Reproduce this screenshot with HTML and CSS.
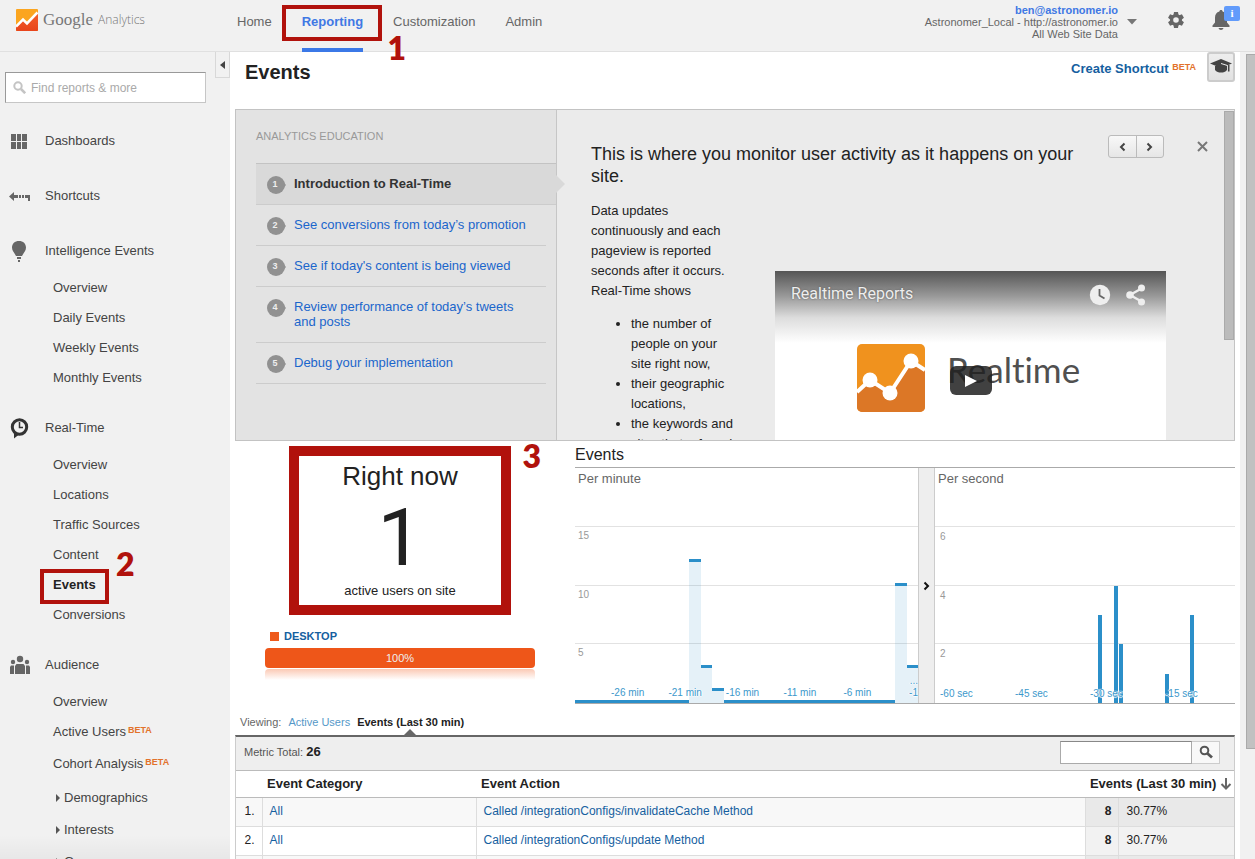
FILE: index.html
```html
<!DOCTYPE html>
<html lang="en">
<head>
<meta charset="utf-8">
<title>Events - Google Analytics</title>
<link rel="stylesheet" href="styles.css">
</head>
<body>
<header class="topbar">
  <a class="brand" href="#">
    <svg width="22" height="22" viewBox="0 0 22 22" aria-hidden="true">
      <defs><linearGradient id="lg" x1="0" y1="0" x2="0" y2="1"><stop offset="0" stop-color="#f4602a"/><stop offset="1" stop-color="#e8451c"/></linearGradient></defs>
      <rect width="22" height="22" rx="1" fill="#fba51f"/>
      <path d="M0 17 6.500 11 11 15 22 3V21a1 1 0 0 1-1 1H1a1 1 0 0 1-1-1z" fill="url(#lg)"/>
      <path d="M0 17.500 7 10.500 11 14.500 21.500 3.500" fill="none" stroke="#fff" stroke-width="2.600"/>
    </svg>
    <span class="brand-google">Google</span><span class="brand-product">Analytics</span>
  </a>
  <nav class="tabs">
    <a href="#">Home</a>
    <a href="#" class="active">Reporting<span class="mark mark-tab"></span><span class="mark-num num-one">1</span></a>
    <a href="#">Customization</a>
    <a href="#">Admin</a>
  </nav>
  <button class="account" type="button">
    <span class="account-text"><b>ben@astronomer.io</b><span>Astronomer_Local - http://astronomer.io</span><span>All Web Site Data</span></span>
    <svg width="10" height="6" viewBox="0 0 10 6"><path d="M0 0h10L5 5.500z" fill="#777"/></svg>
  </button>
  <button class="icon-btn gear" type="button" aria-label="Settings">
    <svg width="16" height="16" viewBox="0 0 16 16"><g fill="#666"><path fill-rule="evenodd" d="M8 2a6 6 0 1 1 0 12A6 6 0 0 1 8 2zm0 3.200a2.800 2.800 0 1 0 0 5.600 2.800 2.800 0 0 0 0-5.600z"/><path d="M6 0h4l.6 3.400H5.400zM6 16h4l.6-3.400H5.400z"/><path d="M6 0h4l.6 3.400H5.400zM6 16h4l.6-3.400H5.400z" transform="rotate(60 8 8)"/><path d="M6 0h4l.6 3.400H5.400zM6 16h4l.6-3.400H5.400z" transform="rotate(120 8 8)"/></g></svg>
  </button>
  <button class="icon-btn bell" type="button" aria-label="Notifications">
    <svg width="18" height="20" viewBox="0 0 18 20"><path d="M9 0c1 0 1.600.6 1.600 1.500C13.500 2.300 15 4.500 15 8v4.500l2.500 3V17H.5v-1.500l2.500-3V8c0-3.500 1.500-5.700 4.400-6.500C7.400.6 8 0 9 0zM6.500 18h5c-.3 1.300-1.300 2-2.500 2s-2.200-.7-2.500-2z" fill="#666"/></svg>
    <span class="bell-badge">i</span>
  </button>
</header>

<div class="shell">
  <aside class="sidebar">
    <button class="collapse" type="button" aria-label="Collapse menu"><svg width="5" height="8" viewBox="0 0 5 8"><path d="M5 0v8L0 4z" fill="#444"/></svg></button>
    <label class="find">
      <svg width="13" height="13" viewBox="0 0 13 13"><circle cx="5" cy="5" r="3.700" fill="none" stroke="#c4c4c4" stroke-width="2"/><path d="M8 8l4.200 4.200" stroke="#c4c4c4" stroke-width="2.600"/></svg>
      <input type="text" placeholder="Find reports &amp; more" aria-label="Find reports and more">
    </label>
    <nav>
      <section class="group"><a class="group-head" href="#"><svg width="24" height="22" viewBox="0 0 24 22"><path d="M3 4h5v7H3zM9 4h4v7H9zM14 4h5v7h-5zM3 12h5v7H3zM9 12h4v7H9zM14 12h5v7h-5z" fill="#666"/></svg>Dashboards</a></section>
      <section class="group"><a class="group-head" href="#"><svg width="24" height="22" viewBox="0 0 24 22"><path d="M1 11.500 6 7v3h4v3H6v3zM11 10h2v3h-2zM14 10h2v3h-2zM17 10h5v6h-2v-3h-3z" fill="#666"/></svg>Shortcuts</a></section>
      <section class="group"><a class="group-head" href="#"><svg width="24" height="22" viewBox="0 0 24 22"><path d="M11 1c4.200 0 7 2.700 7 6.500 0 3.200-2 4.700-4 8.500H8C6 12.200 4 10.700 4 7.500 4 3.700 6.800 1 11 1zM9 17h4v2H9zM10 20h2v2h-2z" fill="#666"/></svg>Intelligence Events</a>
        <ul><li><a href="#">Overview</a></li><li><a href="#">Daily Events</a></li><li><a href="#">Weekly Events</a></li><li><a href="#">Monthly Events</a></li></ul>
      </section>
      <section class="group"><a class="group-head" href="#"><svg width="24" height="22" viewBox="0 0 24 22"><circle cx="11.500" cy="10" r="7.200" fill="none" stroke="#333" stroke-width="3"/><path d="M6 15v6.500l5-4z" fill="#333"/><path d="M11.500 5v5.500H15" fill="none" stroke="#333" stroke-width="1.500"/></svg>Real-Time</a>
        <ul><li><a href="#">Overview</a></li><li><a href="#">Locations</a></li><li><a href="#">Traffic Sources</a></li><li><a href="#">Content</a></li><li><a href="#" class="current">Events<span class="mark mark-side"></span><span class="mark-num num-two">2</span></a></li><li><a href="#">Conversions</a></li></ul>
      </section>
      <section class="group"><a class="group-head" href="#"><svg width="24" height="22" viewBox="0 0 24 22"><g fill="#666"><circle cx="12" cy="5" r="3.200"/><circle cx="5" cy="8" r="2.200"/><circle cx="19" cy="8" r="2.200"/><path d="M7 20v-8l1.500-2h7l1.500 2v8zM2 20v-7l1-1.500h3V20zM22 20v-7l-1-1.500h-3V20z"/></g></svg>Audience</a>
        <ul><li><a href="#">Overview</a></li><li><a href="#">Active Users</a><sup>BETA</sup></li><li><a href="#">Cohort Analysis</a><sup>BETA</sup></li>
        <li class="tree"><a href="#">Demographics</a></li><li class="tree"><a href="#">Interests</a></li><li class="tree"><a href="#">Geo</a></li></ul>
      </section>
    </nav>
  </aside>

  <main class="main">
    <div class="title-row">
      <h1>Events</h1>
      <a class="shortcut" href="#">Create Shortcut <span class="beta">BETA</span></a>
      <button class="edu-btn" type="button" aria-label="Analytics education"><svg width="22" height="16" viewBox="0 0 22 16"><path d="M5 8v4c1.500 2 3.500 2.500 6 2.500s4.500-.5 6-2.500V8z" fill="#444"/><path d="M11 1 22 5.500 11 10 0 5.500z" fill="#444"/><path d="M11 5.500 17.500 7.500v5.500" fill="none" stroke="#eee"/><path d="M18.700 7v6.500" stroke="#444" stroke-width="1.600"/></svg></button>
    </div>

    <section class="edu">
      <div class="edu-nav">
        <h2>ANALYTICS EDUCATION</h2>
        <ol>
          <li class="on"><span class="pin">1</span><span>Introduction to Real-Time</span></li>
          <li><span class="pin">2</span><a href="#">See conversions from today’s promotion</a></li>
          <li><span class="pin">3</span><a href="#">See if today's content is being viewed</a></li>
          <li><span class="pin">4</span><a href="#">Review performance of today’s tweets and posts</a></li>
          <li><span class="pin">5</span><a href="#">Debug your implementation</a></li>
        </ol>
      </div>
      <div class="edu-body">
        <div class="edu-head">
          <h3>This is where you monitor user activity as it happens on your site.</h3>
          <div class="pager">
            <button type="button" aria-label="Previous"><svg width="7" height="10" viewBox="0 0 7 10"><path d="M5.500 1.500 2 5l3.500 3.500" fill="none" stroke="#444" stroke-width="2"/></svg></button><button type="button" aria-label="Next"><svg width="7" height="10" viewBox="0 0 7 10"><path d="M1.500 1.500 5 5 1.500 8.500" fill="none" stroke="#444" stroke-width="2"/></svg></button>
          </div>
          <button class="close" type="button" aria-label="Close"><svg width="11" height="11" viewBox="0 0 11 11"><path d="M1 1l9 9M10 1l-9 9" stroke="#777" stroke-width="2"/></svg></button>
        </div>
        <div class="edu-cols">
          <div class="edu-text">
            <p>Data updates continuously and each pageview is reported seconds after it occurs. Real-Time shows</p>
            <ul><li>the number of people on your site right now,</li><li>their geographic locations,</li><li>the keywords and sites that referred them,</li></ul>
          </div>
          <div class="video">
            <div class="video-bar">
              <span>Realtime Reports</span>
              <svg width="22" height="22" viewBox="0 0 22 22"><circle cx="11" cy="11" r="10.200" fill="#eee"/><path d="M10.500 5v6.500l5 3" fill="none" stroke="#666" stroke-width="1.800"/></svg>
              <svg width="20" height="22" viewBox="0 0 20 22"><path d="M15.500 4.500 4 11l11.500 6.500" fill="none" stroke="#eee" stroke-width="2.400"/><g fill="#eee"><circle cx="15.500" cy="4" r="3.500"/><circle cx="4" cy="11" r="3.800"/><circle cx="15.500" cy="18" r="3.500"/></g></svg>
            </div>
            <div class="video-art">
              <svg width="70" height="70" viewBox="0 0 70 70">
                <rect x="1" y="1" width="68" height="68" rx="5" fill="#f0921e"/>
                <path d="M1 49 14 37 34 50 55 18 69 27V64a5 5 0 0 1-5 5H6a5 5 0 0 1-5-5z" fill="#dc7726"/>
                <path d="M1 49 14 37 34 50 55 18 69 27" fill="none" stroke="#fff" stroke-width="4"/>
                <g fill="#fff"><circle cx="14" cy="37" r="7.500"/><circle cx="34" cy="50" r="7.500"/><circle cx="55" cy="18" r="7.500"/></g>
              </svg>
              <span>Realtime</span>
            </div>
            <button class="play" type="button" aria-label="Play"><svg width="12" height="12" viewBox="0 0 12 12"><path d="M0 0 12 6 0 12z" fill="#fff"/></svg></button>
          </div>
        </div>
      </div>
      <div class="edu-scroll"><div></div></div>
    </section>

    <section class="live">
      <div class="now">
        <div class="now-box"><div class="now-title">Right now</div><div class="now-count">1</div><div class="now-sub">active users on site</div></div>
        <span class="mark-num num-three">3</span>
        <div class="device"><i></i><a href="#">DESKTOP</a></div>
        <div class="share">100%</div>
        <div class="share-reflection"></div>
      </div>
      <div class="charts">
        <h2>Events</h2>
        <div class="charts-row">
          <div class="chart minutes">
            <div class="grid"><div><b>Per minute</b></div><div>15</div><div>10</div><div>5</div></div>
            <div class="bars">
              <i></i><i></i><i></i><i></i><i></i><i></i><i></i><i></i><i></i><i></i><i style="height:60%"></i><i style="height:15%"></i><i style="height:5%"></i><i></i><i></i><i></i><i></i><i></i><i></i><i></i><i></i><i></i><i></i><i></i><i></i><i></i><i></i><i></i><i style="height:50%"></i><i style="height:15%"></i>
            </div>
            <div class="axis"><span>-26 min</span><span>-21 min</span><span>-16 min</span><span>-11 min</span><span>-6 min</span><span>...<br>-1</span></div>
          </div>
          <button class="splitter" type="button" aria-label="Resize charts"><svg width="7" height="10" viewBox="0 0 7 10"><path d="M1.500 1.500 5 5 1.500 8.500" fill="none" stroke="#111" stroke-width="2"/></svg></button>
          <div class="chart seconds">
            <div class="grid"><div><b>Per second</b></div><div>6</div><div>4</div><div>2</div></div>
            <div class="bars">
              <i style="grid-column:33;height:37.5%"></i><i style="grid-column:36;height:50%"></i><i style="grid-column:37;height:25%"></i><i style="grid-column:46;height:12.5%"></i><i style="grid-column:51;height:37.5%"></i>
            </div>
            <div class="axis"><span>-60 sec</span><span>-45 sec</span><span>-30 sec</span><span>-15 sec</span></div>
          </div>
        </div>
      </div>
    </section>

    <div class="viewing"><span>Viewing:</span><a href="#">Active Users</a><b>Events (Last 30 min)</b></div>
    <section class="report">
      <div class="tools">
        <span>Metric Total: <b>26</b></span>
        <form class="search"><input type="text" aria-label="Search table"><button type="button" aria-label="Search"><svg width="14" height="14" viewBox="0 0 14 14"><circle cx="5.500" cy="5.500" r="3.800" fill="none" stroke="#555" stroke-width="2"/><path d="M8.500 8.500l4.500 4" stroke="#555" stroke-width="2.800"/></svg></button></form>
      </div>
      <table>
        <colgroup><col class="c-num"><col class="c-cat"><col><col class="c-val"><col class="c-pct"></colgroup>
        <thead><tr><th></th><th>Event Category</th><th>Event Action</th><th colspan="2" class="sorted">Events (Last 30 min) <svg width="12" height="12" viewBox="0 0 12 12"><path d="M6 0v10M1.500 6 6 10.500 10.500 6" fill="none" stroke="#666" stroke-width="2"/></svg></th></tr></thead>
        <tbody>
          <tr><td>1.</td><td><a href="#">All</a></td><td><a href="#">Called /integrationConfigs/invalidateCache Method</a></td><td class="val">8</td><td class="pct">30.77%</td></tr>
          <tr><td>2.</td><td><a href="#">All</a></td><td><a href="#">Called /integrationConfigs/update Method</a></td><td class="val">8</td><td class="pct">30.77%</td></tr>
          <tr><td></td><td></td><td></td><td class="val"></td><td class="pct"></td></tr>
        </tbody>
      </table>
    </section>
  </main>
  <div class="page-scroll"><div></div></div>
</div>
</body>
</html>
```
FILE: styles.css
```css
* { box-sizing: border-box; }
body {
  margin: 0;
  height: 100vh;
  display: flex;
  flex-direction: column;
  overflow: hidden;
  background: #fff;
  color: #222;
  font: 13px/15px "Liberation Sans", Arial, sans-serif;
}
a { color: #15c; text-decoration: none; }
h1, h2, h3, p, ul, ol { margin: 0; padding: 0; }
button { margin: 0; padding: 0; border: 0; background: none; font: inherit; color: inherit; }
svg { display: block; flex: none; }
input { font: inherit; min-width: 0; outline: 0; }

/* Red call-outs and their numbers */
.mark { position: absolute; border: 4px solid #b1120c; }
.mark-num { position: absolute; font: 800 32px/32px Lato, sans-serif; color: #b1120c; z-index: 3; }
.mark-tab { inset: 5px -19px 7px -20px; }
.num-one { right: -43px; top: 32px; }
.mark-side { inset: -1px -13px -4px -13px; }
.num-two { right: -39px; top: -22px; }
.num-three { right: 24px; top: -1px; }

/* Top bar */
.topbar { flex: none; display: flex; align-items: center; height: 52px; background: #f1f1f1; border-bottom: 1px solid #e0e0e0; padding: 0 15px 0 16px; }
.brand { display: flex; align-items: center; width: 221px; padding-bottom: 11px; color: #777; }
.brand-google { font: 17px/22px "Liberation Serif", serif; padding: 0 5px; }
.brand-product { font: 300 12px/22px "Open Sans", sans-serif; }
.tabs { display: flex; gap: 30px; flex: 1; align-self: stretch; }
.tabs a { position: relative; height: 52px; padding-top: 14px; color: #666; }
.tabs .active { color: #4078e4; font-weight: bold; border-bottom: 4px solid #3b78e7; }
.account { display: flex; align-items: center; gap: 9px; align-self: flex-start; padding-top: 4px; text-align: right; font-size: 11px; line-height: 12px; color: #666; }
.account-text { display: grid; }
.account b { color: #4078e4; }
.icon-btn { position: relative; align-self: flex-start; }
.gear { margin: 12px 0 0 31px; }
.bell { margin: 10px 10px 0 28px; }
.bell-badge { position: absolute; left: 12px; top: -4px; width: 16px; height: 15px; border-radius: 2px; background: #619bfb; color: #fff; font: bold 11px/15px "Liberation Serif", serif; text-align: center; }

.shell { flex: 1; min-height: 0; display: flex; }

/* Sidebar */
.sidebar { position: relative; flex: none; width: 230px; background: #f1f1f1; padding-top: 20px; overflow: hidden; }
.sidebar::after { content: ""; position: absolute; inset: auto 0 0; height: 24px; background: linear-gradient(transparent, rgba(0,0,0,.04)); }
.collapse { position: absolute; top: 0; right: 0; width: 15px; height: 26px; border: 1px solid #d8d8d8; border-top: 0; display: grid; place-items: center; }
.find { display: flex; align-items: center; gap: 5px; margin: 0 24px 10px 5px; padding-left: 7px; height: 31px; background: #fff; border: 1px solid #c6c6c6; border-top-color: #999; border-left-color: #999; }
.find input { flex: 1; border: 0; padding: 1px 0 0; font-size: 12px; }
.find input::placeholder { color: #aaa; opacity: 1; }
.sidebar a { color: #444; }
.group { padding: 20px 0; }
.group:has(ul) { padding-bottom: 7px; }
.group-head { display: flex; align-items: center; gap: 13px; height: 15px; padding-left: 8px; }
.group ul { list-style: none; margin-top: 15px; padding-left: 53px; }
.group li { height: 30px; line-height: 30px; }
.group li a { position: relative; display: inline-block; }
.group .current { color: #222; font-weight: bold; }
.group li sup { margin-left: 2px; }
.group li:has(sup) + li:has(sup) { height: 35px; line-height: 33px; }
.sidebar .tree { display: flex; align-items: center; gap: 4px; height: 32px; padding-left: 3px; }
.tree::before { content: ""; border: 4px solid transparent; border-left: 4px solid #555; border-right: 0; }
sup, .beta { font: bold 9px/12px "Liberation Sans", sans-serif; color: #e2722b; vertical-align: 3px; }

/* Main column */
.main { flex: 1; min-width: 0; padding: 0 5px; }
.title-row { display: flex; align-items: flex-start; height: 57px; padding-left: 10px; }
.title-row h1 { flex: 1; font-size: 20px; line-height: 24px; padding-top: 8px; }
.shortcut { padding-top: 9px; color: #15609f; font-weight: bold; }
.edu-btn { width: 28px; height: 30px; margin-left: 11px; border: 2px solid #ccc; border-radius: 3px; background: linear-gradient(#eee, #e2e2e2); display: flex; justify-content: center; padding-top: 4px; }

.edu { display: flex; height: 332px; border: 1px solid #c3c3c3; background: #ebebeb; overflow: hidden; }
.edu-nav { flex: none; width: 321px; padding: 19px 0 0 20px; background: #e3e3e3; border-right: 1px solid #c6c6c6; }
.edu-nav h2 { font-size: 11px; line-height: 14px; font-weight: normal; color: #999; margin-bottom: 20px; }
.edu-nav ol { list-style: none; }
.edu-nav li { display: flex; gap: 9px; margin-right: 10px; padding: 12px 10px 13px 11px; border-bottom: 1px solid #ccc; }
.edu-nav li a { color: #1b66cc; }
.edu-nav .on { position: relative; margin-right: 0; border-top: 1px solid #c3c3c3; background: #d9d9d9; font-weight: bold; color: #333; }
.on::after { content: ""; position: absolute; left: 100%; top: 11px; border: 9px solid transparent; border-left-color: #d9d9d9; border-right: 0; }
.pin { position: relative; flex: none; width: 18px; height: 18px; margin-bottom: -3px; padding-right: 2px; border-radius: 50%; background: #919191; color: #eee; font: bold 9px/16px "Liberation Sans", sans-serif; text-align: center; }
.pin::after { content: ""; position: absolute; right: -1px; top: 3px; border: 6px solid transparent; border-left: 5px solid #919191; border-right: 0; }

.edu-body { flex: 1; min-width: 0; padding: 25px 16px 0 34px; overflow: hidden; }
.edu-head { display: flex; align-items: flex-start; justify-content: space-between; }
.edu-head h3 { flex: 1; padding: 8px 20px 0 0; font-size: 18px; line-height: 22px; font-weight: normal; }
.pager { display: flex; width: 56px; height: 23px; border: 1px solid #bbb; border-radius: 3px; background: linear-gradient(#f8f8f8, #e6e6e6); }
.pager button { flex: 1; display: grid; place-items: center; }
.pager button + button { border-left: 1px solid #bbb; }
.close { margin: 6px 0 0 33px; }
.edu-cols { display: flex; gap: 40px; padding-top: 14px; }
.edu-text { width: 144px; line-height: 20px; }
.edu-text ul { margin-top: 13px; padding-left: 40px; }
.video { position: relative; width: 391px; height: 220px; margin-top: 70px; background: #fff; }
.video-bar { display: flex; align-items: flex-start; gap: 15px; height: 72px; padding: 13px 20px 0 16px; background: linear-gradient(#555, #999 35%, #ddd 65%, #fff); color: #eee; font: 16px/20px Roboto, sans-serif; }
.video-bar span { flex: 1; text-shadow: 0 0 2px #555; }
.video-art { display: flex; gap: 21px; padding-left: 81px; }
.video-art span { font: 35px/42px Lato, sans-serif; font-variant-ligatures: none; color: #505050; padding-top: 5px; }
.play { position: absolute; inset: 95px auto auto 175px; width: 42px; height: 29px; border-radius: 6px; background: rgba(32,32,32,.85); display: grid; place-items: center; }
.edu-scroll { width: 10px; padding-top: 1px; }
.edu-scroll div { height: 229px; background: #bbb; border: 1px solid #aaa; }

/* Live counters */
.live { display: flex; gap: 10px; height: 263px; }
.now { position: relative; flex: none; width: 330px; padding: 5px 30px 0; text-align: center; }
.now-box { width: 222px; margin: 0 auto; padding: 5px 0 6px; border: 10px solid #b1120c; }
.now-title { font-size: 26px; line-height: 30px; }
.now-count { margin: 7px 0 5px; font: 80px/80px Roboto, sans-serif; }
.now-sub { line-height: 16px; }
.device { display: flex; align-items: center; gap: 5px; margin-top: 14px; padding-left: 5px; font-size: 11px; font-weight: bold; }
.device i { width: 9px; height: 9px; background: #ee5a1c; }
.device a { color: #15609f; }
.share { margin-top: 4px; height: 20px; line-height: 20px; border-radius: 4px; background: #ee5619; color: #eee; font-size: 11px; }
.share-reflection { margin-top: 1px; height: 11px; border-radius: 4px 4px 0 0; background: linear-gradient(#fbc9b4, #fff); }

.charts { flex: 1; min-width: 0; display: flex; flex-direction: column; }
.charts h2 { height: 27px; font-size: 16px; line-height: 27px; font-weight: normal; border-bottom: 1px solid #aaa; }
.charts-row { flex: 1; display: flex; border-bottom: 1px solid #aaa; }
.chart { position: relative; min-width: 0; overflow: hidden; }
.minutes { flex: 343; }
.seconds { flex: 300; }
.splitter { flex: none; width: 17px; border: solid #ccc; border-width: 0 1px; background: #eee; display: grid; place-items: center; }
.grid { height: 100%; display: grid; grid-template-rows: repeat(4, 1fr); }
.grid div { padding: 3px 3px 0; border-bottom: 1px solid #e2e2e2; color: #999; font-size: 10px; line-height: 12px; }
.seconds .grid div { padding: 4px 5px 0; }
.grid div:last-child { border: 0; }
.grid b, .seconds .grid b { display: block; font-size: 13px; line-height: 15px; font-weight: normal; color: #666; }
.seconds .grid div:first-child { padding: 3px 3px 0; }
.bars { position: absolute; inset: 0; display: grid; grid-template-columns: repeat(30, 1fr); grid-template-rows: 100%; align-items: end; }
.minutes .bars i { box-sizing: content-box; border-top: 3px solid #2b8fc9; background: rgba(43,143,201,.12); background-clip: padding-box; }
.seconds .bars { grid-template-columns: repeat(59, 1fr); column-gap: 1px; }
.seconds .bars i { grid-row: 1; background: #2b8fc9; }
.axis { position: absolute; inset: auto 0 4px 0; display: flex; align-items: flex-end; color: #3c98cb; font-size: 10px; line-height: 12px; text-shadow: 0 0 1px #fff, 1px 0 1px #fff, -1px 0 1px #fff, 0 1px 1px #fff; }
.minutes .axis { padding-left: 7%; }
.axis span { flex: 0 0 18%; text-align: center; white-space: nowrap; }
.minutes .axis span:last-child { flex: 1; text-align: right; }
.seconds .axis { left: 5px; right: -5px; bottom: 3px; }
.seconds .axis span { flex: 1; text-align: left; }

/* Report table */
.viewing { display: flex; gap: 7px; height: 31px; padding: 11px 5px 0; font-size: 11px; color: #666; }
.viewing a { color: #5598c8; }
.viewing b { position: relative; color: #222; }
.viewing b::after { content: ""; position: absolute; left: 44%; bottom: 0; border: 6px solid transparent; border-bottom: 6px solid #666; border-top: 0; }
.report { border: solid #ccc; border-width: 0 1px; border-top: 2px solid #666; }
.tools { display: flex; align-items: center; justify-content: space-between; height: 34px; padding: 0 14px 3px 8px; background: #eee; border-bottom: 1px solid #bbb; font-size: 11px; color: #555; }
.tools b { font-size: 13px; color: #222; }
.search { display: flex; width: 160px; height: 23px; }
.search input { flex: 1; border: 1px solid #aaa; border-top-color: #888; }
.search button { width: 28px; border: 1px solid #ccc; border-left: 0; background: #f8f8f8; display: grid; place-items: center; }
table { width: 100%; table-layout: fixed; border-collapse: collapse; font-size: 12px; line-height: 15px; }
.c-num { width: 26px; }
.c-cat { width: 214px; }
.c-val { width: 33px; }
.c-pct { width: 115px; }
th { height: 26px; padding: 0 5px; text-align: left; border-bottom: 1px solid #bbb; font-size: 13px; }
.sorted { padding: 0 2px 0 0; text-align: right; white-space: nowrap; }
.sorted svg { display: inline-block; vertical-align: -2px; }
td { height: 29px; padding: 0 7px; border-bottom: 1px solid #ddd; border-right: 1px solid #ddd; background: #fff; }
td:last-child { border-right: 0; }
td:first-child { text-align: right; }
td a { color: #15609f; }
tbody tr:nth-child(odd) td { background: #f8f8f8; }
td.val { text-align: right; font-weight: bold; background: #f2f2f2; }
td.pct { background: #f2f2f2; }
tbody tr:nth-child(odd) .val, tbody tr:nth-child(odd) .pct { background: #e9e9e9; }

.page-scroll { flex: none; width: 15px; padding: 2px 0 0 6px; background: #f1f1f1; }
.page-scroll div { height: 695px; background: #c1c1c1; border: 1px solid #aaa; border-right: 0; }
```
